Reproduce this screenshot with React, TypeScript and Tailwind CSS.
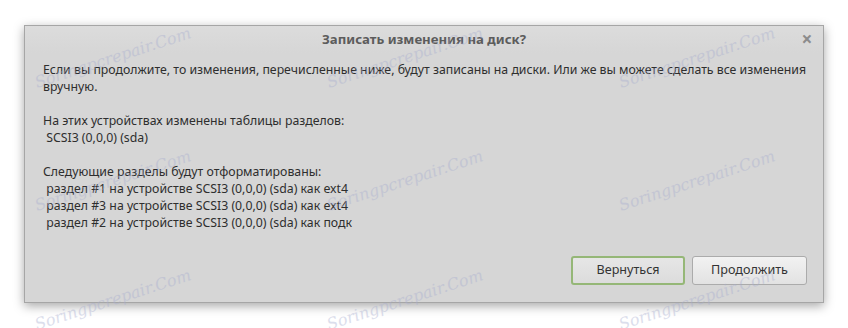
import React from 'react';

const WATERMARKS = [
  { x: 113, y: 58 }, { x: 405, y: 58 }, { x: 697, y: 58 },
  { x: 113, y: 181 }, { x: 405, y: 181 }, { x: 697, y: 181 },
  { x: 113, y: 300 }, { x: 405, y: 300 }, { x: 697, y: 300 },
];

const LINES = [
  'Если вы продолжите, то изменения, перечисленные ниже, будут записаны на диски. Или же вы можете сделать все изменения',
  'вручную.',
  '',
  'На этих устройствах изменены таблицы разделов:',
  ' SCSI3 (0,0,0) (sda)',
  '',
  'Следующие разделы будут отформатированы:',
  ' раздел #1 на устройстве SCSI3 (0,0,0) (sda) как ext4',
  ' раздел #3 на устройстве SCSI3 (0,0,0) (sda) как ext4',
  ' раздел #2 на устройстве SCSI3 (0,0,0) (sda) как подк',
];

export default function App() {
  return (
    <div className="relative w-[848px] h-[328px] bg-white overflow-hidden pl-[24px] pt-[25px] font-['Noto_Sans',sans-serif]">
      <div className="w-[800px] h-[278px] flex flex-col border border-[#a6a6a6] bg-[#d6d6d6] shadow-[0_3px_10px_rgba(0,0,0,0.35)]">
        <div className="h-[27px] flex items-center bg-gradient-to-b from-[#dcdcdc] to-[#d6d6d6]">
          <div className="w-[32px]" />
          <div className="flex-1 text-center text-[13.2px] font-bold text-[#5c5c5c]">Записать изменения на диск?</div>
          <div className="w-[32px] text-center text-[19px] font-bold text-[#8c8c8c] leading-none">×</div>
        </div>
        <div className="pl-[18px] pt-[8px] text-[12.3px] leading-[17px] text-[#2e2e2e] whitespace-pre">
          {LINES.map((l, i) => (
            <div key={i} className="h-[17px]">{l}</div>
          ))}
        </div>
        <div className="mt-auto flex justify-end gap-[7px] pr-[16px] pb-[17px]">
          <button className="w-[114px] h-[29px] rounded-[3px] border-2 border-[#95b777] bg-gradient-to-b from-[#e6e6e6] to-[#dcdcdc] text-[12.6px] text-[#333]">
            Вернуться
          </button>
          <button className="w-[115px] h-[29px] rounded-[3px] border border-[#ababab] bg-gradient-to-b from-[#f2f2f2] to-[#e2e2e2] text-[12.6px] text-[#333]">
            Продолжить
          </button>
        </div>
      </div>
      {WATERMARKS.map((w, i) => (
        <div
          key={i}
          className="absolute -translate-x-1/2 -translate-y-1/2 -rotate-[18deg] text-[16px] italic text-[#a8aed0] opacity-40 font-['DejaVu_Serif',serif] whitespace-nowrap pointer-events-none"
          style={{ left: w.x, top: w.y }}
        >
          Soringpcrepair.Com
        </div>
      ))}
    </div>
  );
}
